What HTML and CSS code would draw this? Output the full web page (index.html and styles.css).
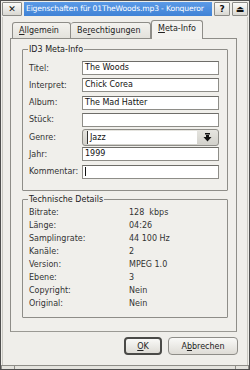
FILE: index.html
```html
<!DOCTYPE html>
<html lang="de">
<head>
    <meta charset="UTF-8">
    <title>Eigenschaften für 01TheWoods.mp3 - Konqueror</title>
    <link rel="stylesheet" href="styles.css">
</head>
<body>
    <div class="window">
        <div class="titlebar">
            <span class="tb-btn">✕</span>
            <span class="tb-title">Eigenschaften für 01TheWoods.mp3 - Konqueror</span>
            <span class="tb-btn small">?</span>
            <span class="tb-btn small">⏏</span>
        </div>

        <div class="dialog">
            <div class="tabs">
                <span class="tab tab-first"><u>A</u>llgemein</span>
                <span class="tab">Be<u>r</u>echtigungen</span>
                <span class="tab active"><u>M</u>eta-Info</span>
            </div>

            <div class="panel">
                <fieldset class="group">
                    <legend>ID3 Meta-Info</legend>
                    <div class="form">
                        <label>Titel:</label>
                        <div class="field">The Woods</div>
                        <label>Interpret:</label>
                        <div class="field">Chick Corea</div>
                        <label>Album:</label>
                        <div class="field">The Mad Hatter</div>
                        <label>Stück:</label>
                        <div class="field"></div>
                        <label>Genre:</label>
                        <div class="combo">
                            <span class="combo-text">Jazz</span>
                            <span class="combo-btn">
                                <svg width="9" height="9" viewBox="0 0 9 9">
                                    <rect x="2" y="0" width="5" height="1.5" fill="#111"/>
                                    <rect x="3" y="2" width="3" height="2" fill="#111"/>
                                    <polygon points="0.5,4 8.5,4 4.5,8.5" fill="#111"/>
                                </svg>
                            </span>
                        </div>
                        <label>Jahr:</label>
                        <div class="field">1999</div>
                        <label>Kommentar:</label>
                        <div class="field"><span class="cursor"></span></div>
                    </div>
                </fieldset>

                <fieldset class="group">
                    <legend>Technische Details</legend>
                    <div class="details">
                        <span>Bitrate:</span><span>128&nbsp; kbps</span>
                        <span>Länge:</span><span>04:26</span>
                        <span>Samplingrate:</span><span>44 100 Hz</span>
                        <span>Kanäle:</span><span>2</span>
                        <span>Version:</span><span>MPEG 1.0</span>
                        <span>Ebene:</span><span>3</span>
                        <span>Copyright:</span><span>Nein</span>
                        <span>Original:</span><span>Nein</span>
                    </div>
                </fieldset>
            </div>

            <div class="buttons">
                <button class="btn default"><u>O</u>K</button>
                <button class="btn">A<u>b</u>brechen</button>
            </div>
        </div>

        <div class="grip">
            <span class="grip-corner"></span>
            <span class="grip-corner"></span>
        </div>
    </div>
</body>
</html>
```

FILE: styles.css
```css
* {
    margin: 0;
    padding: 0;
    box-sizing: border-box;
}

body {
    font-family: "DejaVu Sans", Verdana, sans-serif;
    font-size: 8px;
    color: #222;
    background-color: #efeeea;
}

.window {
    width: 250px;
    height: 370px;
    display: flex;
    flex-direction: column;
    border: 1px solid #4f4f4f;
    background-color: #efeeea;
}

/* title bar */
.titlebar {
    display: flex;
    gap: 2px;
    padding: 1px 1px 0 1px;
    height: 16px;
}

.tb-btn {
    flex-shrink: 0;
    width: 20px;
    height: 14px;
    display: flex;
    align-items: center;
    justify-content: center;
    border: 1px solid #8c8c88;
    border-radius: 1px;
    background: linear-gradient(#fbfbf9, #d9d8d2);
    font-weight: bold;
    font-size: 9px;
    color: #111;
}

.tb-btn.small {
    width: 16px;
}

.tb-title {
    flex: 1;
    min-width: 0;
    height: 14px;
    line-height: 14px;
    padding-left: 2px;
    background: linear-gradient(#5b9ae6, #3f82d6);
    color: #fff;
    font-size: 7.6px;
    letter-spacing: -0.15px;
    white-space: nowrap;
    overflow: hidden;
}

/* dialog body */
.dialog {
    flex: 1;
    display: flex;
    flex-direction: column;
    padding: 4px 10px 0 7px;
    border-left: 1px solid #c9c8c2;
    border-right: 1px solid #c9c8c2;
    margin: 0 1px;
}

.tabs {
    display: flex;
    align-items: flex-end;
    height: 17px;
    padding-left: 2px;
}

.tab {
    height: 16px;
    padding: 3px 0 0 6px;
    border: 1px solid #8e8d88;
    border-bottom: none;
    border-radius: 3px 3px 0 0;
    background: linear-gradient(#f3f2ee, #e3e2dc);
    color: #222;
}

.tab-first {
    width: 59px;
}

.tab:nth-child(2) {
    width: 80px;
    border-left: none;
}

.tab.active {
    width: 52px;
    height: 19px;
    padding-top: 3px;
    background: #f3f2ef;
    position: relative;
    top: 1px;
}

.panel {
    height: 294px;
    display: flex;
    flex-direction: column;
    gap: 4px;
    padding: 6px 8px 0 11px;
    border: 1px solid #8e8d88;
    border-bottom-color: #9a9994;
    background-color: #f0efeb;
}

.group {
    border: 1px solid #8e8d88;
    border-radius: 1px;
    padding: 0 8px 0 6px;
}

.group legend {
    padding: 0 1px;
    margin-left: -1px;
    color: #222;
}

/* ID3 form */
.form {
    display: grid;
    grid-template-columns: 53px 1fr;
    grid-auto-rows: 14px;
    row-gap: 3.3px;
    align-items: center;
    padding: 7px 0 11px 0;
}

.form label {
    color: #333;
}

.field {
    height: 14px;
    line-height: 12px;
    padding-left: 2px;
    border: 1px solid #8e8d88;
    border-top-color: #6e6d69;
    background-color: #fff;
    color: #111;
}

.cursor {
    display: inline-block;
    width: 1px;
    height: 9px;
    margin-top: 1px;
    background-color: #111;
}

.combo {
    height: 17px;
    margin: 3px 0 2px 0;
    display: flex;
    border: 1px solid #8e8d88;
    border-radius: 3px;
    background: linear-gradient(#e6e5e0, #d2d1cb);
    padding: 1px;
}

.combo-text {
    flex: 1;
    line-height: 13px;
    padding-left: 2px;
    margin-left: 3px;
    border-left: 1px solid #333;
    background-color: #fff;
    color: #111;
}

.combo-btn {
    width: 20px;
    display: flex;
    align-items: center;
    justify-content: center;
}

/* technical details */
.details {
    display: grid;
    grid-template-columns: 100px 1fr;
    grid-auto-rows: 13px;
    align-items: center;
    padding: 2px 0 7px 0;
    color: #333;
}

/* buttons */
.buttons {
    display: flex;
    justify-content: flex-end;
    gap: 6px;
    padding: 5px 0 0 0;
}

.btn {
    height: 18px;
    font-family: "DejaVu Sans", Verdana, sans-serif;
    font-size: 8px;
    color: #222;
    border: 1px solid #8e8d88;
    border-radius: 4px;
    background: linear-gradient(#f9f9f7, #dedcd6);
}

.btn.default {
    width: 38px;
    border: 2px solid #4a4a47;
}

.btn:last-child {
    width: 70px;
    margin-right: -1px;
}

.grip {
    display: flex;
    justify-content: space-between;
    height: 4px;
    border-top: 1px solid #8e8d88;
    background-color: #e4e3de;
}

.grip-corner {
    width: 14px;
    border-right: 1px solid #8e8d88;
    border-left: 1px solid #8e8d88;
}
```
